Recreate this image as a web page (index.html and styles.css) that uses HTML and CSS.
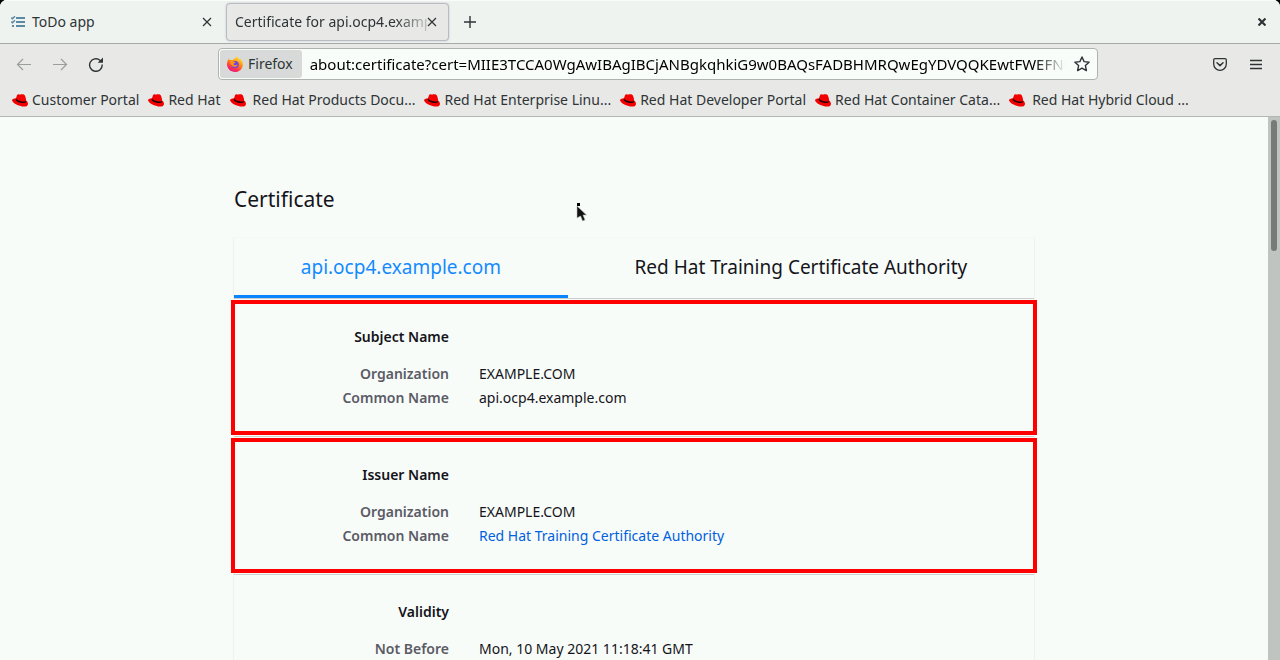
FILE: index.html
```html
<!DOCTYPE html>
<html lang="en">
<head>
<meta charset="utf-8">
<title>Certificate for api.ocp4.example.com</title>
<link rel="stylesheet" href="styles.css">
</head>
<body>
<svg class="defs" aria-hidden="true">
  <symbol id="hat" viewBox="0 0 16 13">
    <path fill="#f40000" d="M5 1.200C5.500.2 6.300 0 7.200.4c.7.3 1.300.2 2-.1C10.600-.1 12.200.2 12.900 1.500c.7 1.500 1.100 3.400 1.300 5.200 1.300.8 2 2.300 1.700 3.700-.5 1.900-3 2.500-5.700 2C6 11.700 1 9.500.1 6.600-.3 5 1.500 4.300 3.900 4.400z"/>
    <path fill="#200" d="M3.900 4.300c1 1.800 3.800 2.900 6.700 3.200 1.700.2 2.900 0 3.500-.8l.2 1c-.7 1.100-2.300 1.500-4.500 1.200C6.500 8.500 3.800 7.200 3.500 5.500z"/>
  </symbol>
  <symbol id="cross" viewBox="0 0 10 10">
    <path fill="none" stroke="currentColor" stroke-width="1.200" d="M1 1l8 8M9 1l-8 8"/>
  </symbol>
</svg>
<header class="browser">
  <div class="tabstrip">
    <div class="tab">
      <svg class="icon-list" viewBox="0 0 14 12" fill="none" stroke="#5b8aa3"><path stroke-width="2" d="M5 2h9M5 6h9M5 10h9"/><path stroke-width="1.500" d="M.3 1.700l1.200 1L4 .3M.3 5.700l1.200 1L4 4.300"/><path stroke-width="2" d="M1 10h2"/></svg>
      <span class="tab-title">ToDo app</span>
      <button class="plain" aria-label="Close ToDo app"><svg class="cross"><use href="#cross"/></svg></button>
    </div>
    <div class="tab active">
      <span class="tab-title fade">Certificate for api.ocp4.examp</span>
      <button class="plain" aria-label="Close Certificate tab"><svg class="cross"><use href="#cross"/></svg></button>
    </div>
    <button class="plain new-tab" aria-label="New tab"><svg class="plus" viewBox="0 0 12 12"><path stroke="currentColor" stroke-width="1.400" d="M6 0v12M0 6h12"/></svg></button>
    <button class="plain close-window" aria-label="Close window"><svg class="cross-small" viewBox="0 0 8 8"><path stroke="currentColor" stroke-width="2.200" d="M.5.5l7 7M7.500.5l-7 7"/></svg></button>
  </div>
  <div class="toolbar">
    <nav class="history" aria-label="History">
      <button class="plain dim" aria-label="Back"><svg class="icon16" viewBox="0 0 16 16"><path fill="none" stroke="currentColor" stroke-width="1.200" d="M15 8.500H1.500M7 3L1.500 8.500 7 14"/></svg></button>
      <button class="plain dim" aria-label="Forward"><svg class="icon16" viewBox="0 0 16 16"><path fill="none" stroke="currentColor" stroke-width="1.200" d="M1 8.500h13.500M9 3l5.500 5.500L9 14"/></svg></button>
      <button class="plain" aria-label="Reload"><svg class="icon16" viewBox="0 0 16 16"><path fill="none" stroke="currentColor" stroke-width="1.400" d="M14.200 8.500A6.300 6.300 0 1 1 12 4.200L13.500 5.500"/><path fill="currentColor" d="M15 1.500v5.300H9.700z"/></svg></button>
    </nav>
    <div class="urlbar">
      <button class="identity">
        <svg class="icon16" viewBox="0 0 16 16">
          <defs><linearGradient id="flame" x1=".8" y1="0" x2=".3" y2="1"><stop offset="0" stop-color="#fff44f"/><stop offset=".4" stop-color="#ff980e"/><stop offset=".75" stop-color="#ff3647"/><stop offset="1" stop-color="#e31587"/></linearGradient></defs>
          <path fill="url(#flame)" d="M2 2.500c.2 1 .6 1.500 1.200 1.600.8-.2 1.700-.1 2.300.1.500-.9 1.300-1.500 2.200-1.800C8.500 2 9.300 1 10.200 0c.4 1.800 1.600 2.400 2.600 3.400.4-.1.500-.5.400-1 1.700 1.500 2.800 3.500 2.700 6C15.700 12.600 12.400 16 8 16S0 12.700 0 8.300C0 6 .8 4 2 2.500z"/>
          <circle cx="8.200" cy="8.600" r="3.600" fill="#7542e5"/>
          <path fill="#ff980e" d="M3 5.500c1.400-.8 2.500-.2 3.500.3L8.500 6c-.2 1-1.300 1.100-1.800 1.700-.5.800.3 1.800 1.600 1.500 1-.2 1.600-.6 2.300-.3-.4 1.200-2 2.200-3.700 1.800C4.500 10.200 3.200 8 3 5.500z"/>
        </svg>
        <span>Firefox</span>
      </button>
      <input class="url" aria-label="Address" value="about:certificate?cert=MIIE3TCCA0WgAwIBAgIBCjANBgkqhkiG9w0BAQsFADBHMRQwEgYDVQQKEwtFWEFNUE">
      <button class="plain star" aria-label="Bookmark this page"><svg class="icon16" viewBox="0 0 16 16"><path fill="none" stroke="currentColor" stroke-width="1.400" stroke-linejoin="round" d="M8 1l2.100 4.600 5 .6-3.700 3.400 1 5L8 12.100l-4.400 2.500 1-5L.9 6.200l5-.6z"/></svg></button>
    </div>
    <div class="tools">
      <button class="plain" aria-label="Save to Pocket"><svg class="pocket" viewBox="0 0 14 13"><path fill="none" stroke="currentColor" stroke-width="1.300" stroke-linejoin="round" d="M2 .7h10q1.300 0 1.300 1.300v4a6.300 6.300 0 0 1-12.600 0V2Q.7.7 2 .7z"/><path fill="none" stroke="currentColor" stroke-width="1.500" stroke-linecap="round" stroke-linejoin="round" d="M4 4.800l3 2.800 3-2.800"/></svg></button>
      <button class="plain" aria-label="Open menu"><svg class="burger" viewBox="0 0 12 11"><path stroke="currentColor" stroke-width="1.300" d="M0 1.500h12M0 5.500h12M0 9.500h12"/></svg></button>
    </div>
  </div>
  <nav class="bookmarks" aria-label="Bookmarks">
    <a href="#"><svg class="hat"><use href="#hat"/></svg>Customer Portal</a>
    <a href="#"><svg class="hat"><use href="#hat"/></svg>Red Hat</a>
    <a class="wide" href="#"><svg class="hat"><use href="#hat"/></svg>Red Hat Products Docu...</a>
    <a href="#"><svg class="hat"><use href="#hat"/></svg>Red Hat Enterprise Linu...</a>
    <a href="#"><svg class="hat"><use href="#hat"/></svg>Red Hat Developer Portal</a>
    <a href="#"><svg class="hat"><use href="#hat"/></svg>Red Hat Container Cata...</a>
    <a class="wide" href="#"><svg class="hat"><use href="#hat"/></svg>Red Hat Hybrid Cloud ...</a>
  </nav>
</header>
<div class="viewport">
  <main class="page">
    <h1>Certificate</h1>
    <div class="card">
      <div class="cert-tabs" role="tablist">
        <button class="cert-tab selected" role="tab" aria-selected="true">api.ocp4.example.com</button>
        <button class="cert-tab" role="tab" aria-selected="false">Red Hat Training Certificate Authority</button>
      </div>
      <section class="info">
        <div class="info-body marked">
          <h2>Subject Name</h2>
          <dl>
            <dt>Organization</dt><dd>EXAMPLE.COM</dd>
            <dt>Common Name</dt><dd>api.ocp4.example.com</dd>
          </dl>
        </div>
      </section>
      <section class="info">
        <div class="info-body marked">
          <h2>Issuer Name</h2>
          <dl>
            <dt>Organization</dt><dd>EXAMPLE.COM</dd>
            <dt>Common Name</dt><dd><a href="#">Red Hat Training Certificate Authority</a></dd>
          </dl>
        </div>
      </section>
      <section class="info">
        <div class="info-body">
          <h2>Validity</h2>
          <dl>
            <dt>Not Before</dt><dd>Mon, 10 May 2021 11:18:41 GMT</dd>
          </dl>
        </div>
      </section>
    </div>
  </main>
  <div class="scrollbar"><div class="thumb"></div></div>
</div>
<svg class="pointer" viewBox="0 0 12 20"><path fill="#111" stroke="#bbb" stroke-width=".6" d="M1 3l9.500 9H7l2 5-2.400 1-2-5L1 15z"/><path fill="#000" d="M1 0h3v3H1z"/></svg>
</body>
</html>
```

FILE: styles.css
```css
* { box-sizing: border-box; }
html { background: #000; }
body {
  margin: 0;
  height: 100vh;
  display: flex;
  flex-direction: column;
  overflow: hidden;
  border-radius: 7px 7px 0 0;
  background: #f8fcf9;
  color: #15141a;
  font: 14px/24px "Noto Sans", "Open Sans", sans-serif;
}
.defs { display: none; }
svg { display: block; flex: none; }
button, input { font: inherit; color: inherit; }
.plain {
  display: flex;
  align-items: center;
  justify-content: center;
  padding: 0;
  border: 0;
  background: none;
}
.browser { color: #2e3436; background: #e8e8e7; border-bottom: 1px solid #b3b7b4; }
.tabstrip {
  display: flex;
  align-items: center;
  height: 44px;
  padding-right: 14px;
  background: #eff3f0;
  border-top: 1px solid #fafcfb;
  border-bottom: 1px solid #a6aaa7;
}
.tab {
  display: flex;
  align-items: center;
  width: 223px;
  height: 38px;
  padding: 0 11px;
  white-space: nowrap;
}
.tab:first-child { margin-right: 3px; }
.tab.active {
  padding: 0 11px 0 8px;
  background: #e8e8e7;
  border: 1px solid #b9bbc4;
  border-radius: 4px;
  box-shadow: 0 0 2px #b9bbc4;
}
.tab-title { flex: 1; min-width: 0; }
.fade { mask-image: linear-gradient(to right, #000 calc(100% - 32px), transparent calc(100% + 8px)); mask-clip: no-clip; }
.icon-list { width: 14px; height: 12px; margin-right: 7px; }
.cross { width: 10px; height: 10px; }
.new-tab { margin-left: 15px; }
.plus { width: 12px; height: 12px; }
.close-window { margin-left: auto; }
.cross-small { width: 8px; height: 8px; }
.toolbar {
  display: grid;
  grid-template-columns: 218px minmax(0, 880px) 1fr;
  align-items: center;
  padding-top: 4px;
}
.history { display: flex; gap: 20px; padding-left: 16px; }
.dim { color: #999d9b; }
.icon16 { width: 16px; height: 16px; }
.urlbar {
  display: flex;
  align-items: center;
  height: 32px;
  padding: 1px 7px 1px 1px;
  background: #f9fdfa;
  border: 1px solid #afb3b0;
  border-radius: 4px;
}
.identity {
  display: flex;
  align-items: center;
  gap: 5px;
  height: 28px;
  padding: 0 9px 0 7px;
  border: 0;
  border-radius: 3px;
  background: #d7dad8;
}
.url {
  flex: 1;
  min-width: 0;
  margin: 0 8px;
  padding: 0;
  border: 0;
  outline: 0;
  background: none;
  color: #000;
  font-size: 15px;
  mask-image: linear-gradient(to right, #000 calc(100% - 32px), transparent);
}
.tools { display: flex; justify-content: flex-end; gap: 23px; padding-right: 18px; }
.pocket { width: 14px; height: 13px; }
.burger { width: 12px; height: 11px; }
.bookmarks {
  display: flex;
  gap: 9px;
  padding: 8px 12px 4px;
  white-space: nowrap;
}
.bookmarks a {
  display: flex;
  align-items: center;
  gap: 4px;
  color: inherit;
  text-decoration: none;
}
.bookmarks .wide { gap: 7px; }
.hat { width: 16px; height: 13px; }
.viewport { flex: 1; min-height: 0; display: flex; }
.page { flex: 1; overflow: hidden; padding: 67px 16px 0; }
h1, .card { max-width: 802px; margin: 0 auto; }
h1 { padding-left: 1px; font-size: 21px; line-height: 30px; font-weight: 400; }
.card { margin-top: 23px; border: 1px solid #eff2f0; border-top-color: #f5f9f6; }
.cert-tabs { display: flex; border-bottom: 1px solid #c9cccb; }
.cert-tab {
  flex: 1 1 auto;
  height: 60px;
  padding: 0 12px;
  border: 0;
  border-bottom: 3px solid transparent;
  background: none;
  font-size: 19px;
}
.cert-tab.selected { color: #148aff; border-color: #0a84ff; }
.info { display: flow-root; border-bottom: 1px solid #ccd0ce; }
.info-body { --label: 215px; padding: 25px 0; }
.marked {
  --label: 218px;
  margin: 1px -3px;
  outline: 4px solid #f00;
  outline-offset: -4px;
}
h2 { margin: 0 0 13px; width: var(--label); text-align: right; font-size: 14px; line-height: 24px; font-weight: 600; }
dl { display: grid; grid-template-columns: var(--label) 1fr; column-gap: 30px; margin: 0; }
dt { text-align: right; font-weight: 600; color: #5b5b66; }
dd { margin: 0; }
dd a { color: #0060df; text-decoration: none; }
.scrollbar { width: 12px; padding: 3px 3px 0; background: #c0c4c1; }
.thumb { height: 131px; border-radius: 3px; background: #777b78; }
.pointer { position: absolute; left: 576px; top: 203px; width: 12px; height: 20px; }
```
